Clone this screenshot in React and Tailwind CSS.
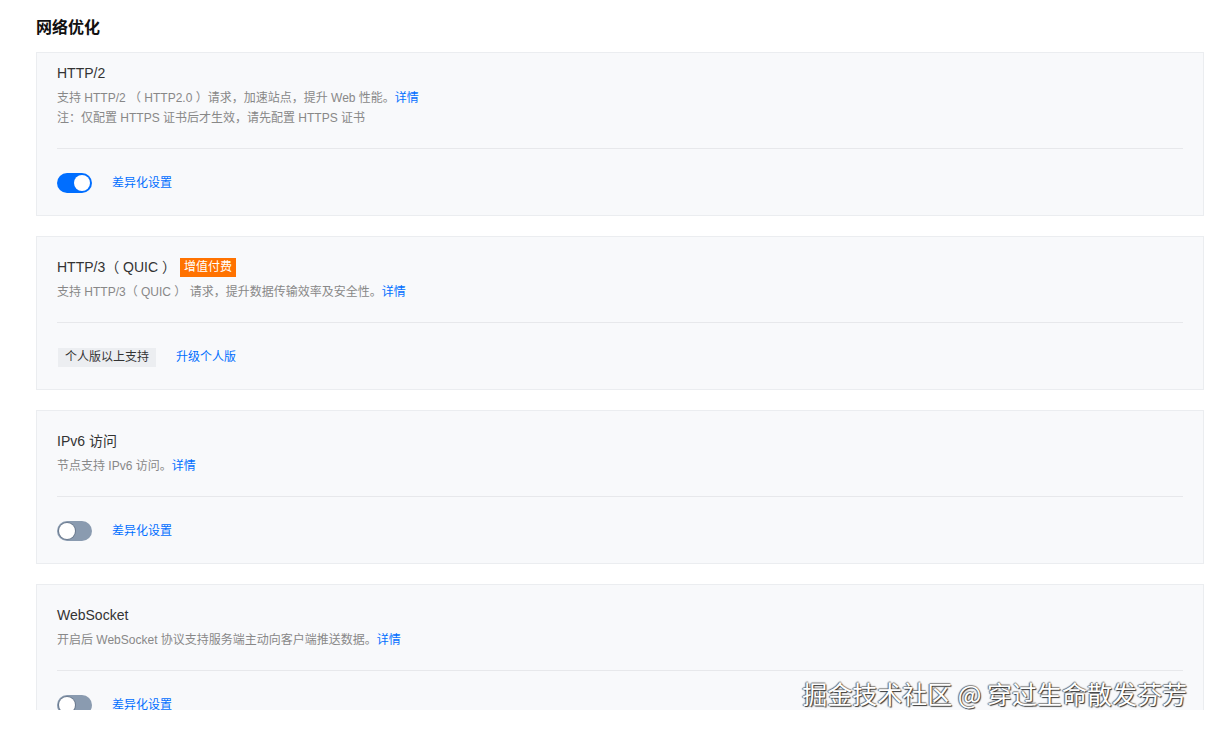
import React from 'react';

const FONT = { fontFamily: '"Liberation Sans", Arial, "Noto Sans CJK SC", sans-serif' };

function Toggle({ on }) {
  return (
    <span
      className={`relative inline-block w-[35px] h-[20px] rounded-full ${on ? 'bg-[#006eff]' : 'bg-[#8a9bb0]'}`}
    >
      <span
        className={`absolute top-[2px] w-[16px] h-[16px] rounded-full bg-white ${on ? 'left-[17px]' : 'left-[2px] shadow-[0_0_0_1px_#6b7a8e]'}`}
      />
    </span>
  );
}

function Link({ children }) {
  return <a className="text-[#006eff] cursor-pointer">{children}</a>;
}

function Card({ title, badge, lines, footer, first }) {
  return (
    <div className={`bg-[#f8f9fb] border border-[#ebedf0] px-5 ${first ? 'pt-[10px]' : 'pt-5'} mb-5`}>
      <div className="flex items-center h-5 text-[14px] text-[#333]">
        <span>{title}</span>
        {badge && (
          <span className="ml-[4px] bg-[#ff7200] text-white text-[12px] leading-[19px] px-[4px]">{badge}</span>
        )}
      </div>
      <div className="mt-[5px] text-[12px] leading-[20px] text-[#888]">
        {lines.map((l, i) => (
          <div key={i}>{l}</div>
        ))}
      </div>
      <div className="mt-5 border-t border-[#e7e8eb]" />
      <div className="flex items-center h-[66px] pt-[2px]">{footer}</div>
    </div>
  );
}

export default function App() {
  const diff = (on) => (
    <>
      <Toggle on={on} />
      <span className="ml-5 text-[12px] text-[#006eff]">差异化设置</span>
    </>
  );

  return (
    <div className="relative h-[710px] overflow-hidden bg-white" style={FONT}>
      <div className="pl-9 pr-[5px]">
        <h2 className="h-[52px] pt-[18px] text-[16px] font-bold leading-[20px] text-[#111]">网络优化</h2>
        <Card
          first
          title="HTTP/2"
          lines={[
            <>支持 HTTP/2 （ HTTP2.0 ）请求，加速站点，提升 Web 性能。<Link>详情</Link></>,
            '注：仅配置 HTTPS 证书后才生效，请先配置 HTTPS 证书',
          ]}
          footer={diff(true)}
        />
        <Card
          title="HTTP/3（ QUIC ）"
          badge="增值付费"
          lines={[<>支持 HTTP/3（ QUIC ） 请求，提升数据传输效率及安全性。<Link>详情</Link></>]}
          footer={
            <>
              <span className="ml-px bg-[#eceef1] text-[#333] text-[12px] leading-[19px] px-[7px]">个人版以上支持</span>
              <span className="ml-5 text-[12px] text-[#006eff]">升级个人版</span>
            </>
          }
        />
        <Card
          title="IPv6 访问"
          lines={[<>节点支持 IPv6 访问。<Link>详情</Link></>]}
          footer={diff(false)}
        />
        <Card
          title="WebSocket"
          lines={[<>开启后 WebSocket 协议支持服务端主动向客户端推送数据。<Link>详情</Link></>]}
          footer={diff(false)}
        />
      </div>
      <div
        className="absolute right-[22px] bottom-[2px] text-[25px] leading-[30px] text-white"
        style={{ textShadow: '1px 1px 1px #333, -1px 0 1px #666, 0 -1px 1px #888', fontFamily: '"Noto Sans CJK SC", sans-serif' }}
      >
        掘金技术社区 @ 穿过生命散发芬芳
      </div>
    </div>
  );
}
